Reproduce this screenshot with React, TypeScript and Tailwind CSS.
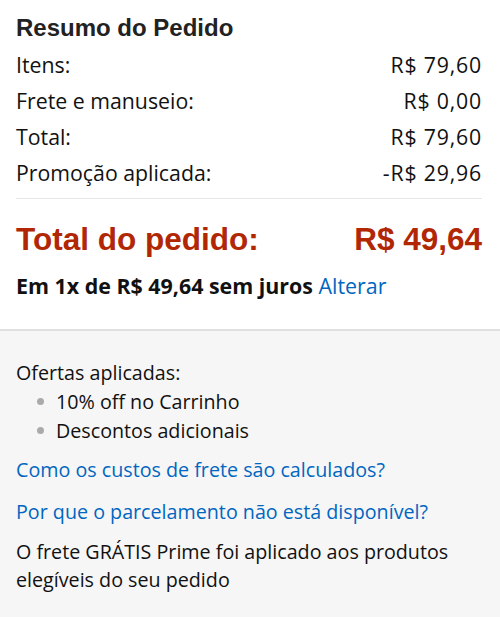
import React from "react";

const body = { fontFamily: '"Open Sans", "Noto Sans", sans-serif' };
const arial = { fontFamily: '"Liberation Sans", Arial, sans-serif' };

function Row({ label, value }: { label: string; value: string }) {
  return (
    <div className="flex justify-between leading-[36px] text-[21.3px] text-[#111]">
      <span>{label}</span>
      <span className="tracking-[0.8px]">{value}</span>
    </div>
  );
}

export default function App() {
  return (
    <div className="w-[500px] h-[617px] bg-[#f6f6f6] overflow-hidden" style={body}>
      <div className="bg-white pl-4 pr-[18px] pt-[9px] pb-[28px]">
        <h1 className="text-[24px] font-bold leading-[38px] text-[#222]" style={arial}>
          Resumo do Pedido
        </h1>
        <Row label="Itens:" value="R$ 79,60" />
        <Row label="Frete e manuseio:" value="R$ 0,00" />
        <Row label="Total:" value="R$ 79,60" />
        <Row label="Promoção aplicada:" value="-R$ 29,96" />
        <div className="mt-[7px] border-t border-[#e7e7e7]" />
        <div
          className="mt-[20px] flex justify-between text-[31.5px] font-bold leading-[40px] text-[#B12704]"
          style={arial}
        >
          <span>Total do pedido:</span>
          <span>R$ 49,64</span>
        </div>
        <div className="mt-[12px] text-[21.4px] leading-[30px] font-bold text-[#111]">
          Em 1x de R$ 49,64 sem juros{" "}
          <a className="font-normal text-[#0066c0]">Alterar</a>
        </div>
      </div>
      <div className="border-t-2 border-[#e0e0e0] px-4 pt-[27px] text-[19.7px] text-[#111]">
        <div className="leading-[29px]">Ofertas aplicadas:</div>
        <ul className="leading-[29px]">
          <li className="flex items-center">
            <span className="ml-[21px] mr-[12px] w-[7px] h-[7px] rounded-full bg-[#aaaaaa]" />
            10% off no Carrinho
          </li>
          <li className="flex items-center">
            <span className="ml-[21px] mr-[12px] w-[7px] h-[7px] rounded-full bg-[#aaaaaa]" />
            Descontos adicionais
          </li>
        </ul>
        <div className="mt-[10px] leading-[30px] text-[#0066c0]">
          Como os custos de frete são calculados?
        </div>
        <div className="mt-[12px] leading-[30px] text-[#0066c0]">
          Por que o parcelamento não está disponível?
        </div>
        <p className="mt-[11px] leading-[28px]">
          O frete GRÁTIS Prime foi aplicado aos produtos elegíveis do seu pedido
        </p>
      </div>
    </div>
  );
}
